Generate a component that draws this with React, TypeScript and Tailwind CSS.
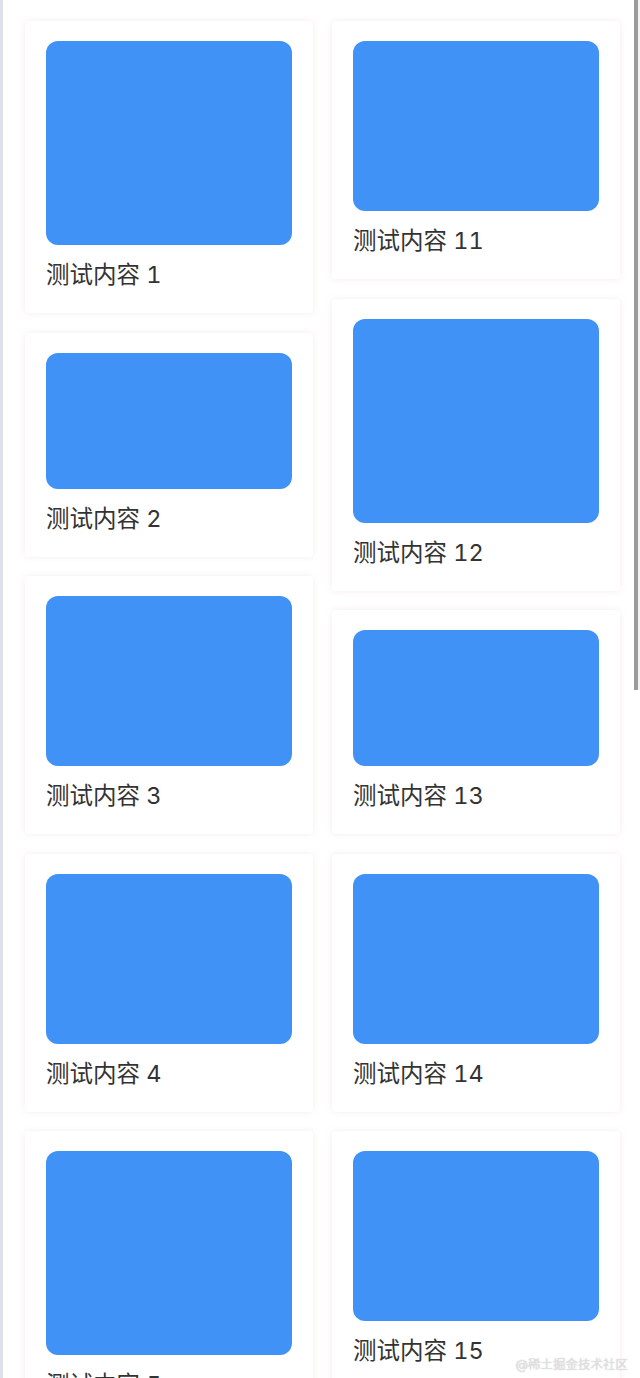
const leftCol = [
  { id: 1, h: 204 },
  { id: 2, h: 136 },
  { id: 3, h: 170 },
  { id: 4, h: 170 },
  { id: 5, h: 204 },
];

const rightCol = [
  { id: 11, h: 170 },
  { id: 12, h: 204 },
  { id: 13, h: 136 },
  { id: 14, h: 170 },
  { id: 15, h: 170 },
];

function Card({ id, h }: { id: number; h: number }) {
  return (
    <div className="bg-white rounded-[4px] px-[21px] pt-5 pb-[19px] shadow-[0_0_6px_rgba(225,200,195,0.35)]">
      <div className="w-full rounded-[12px] bg-[#4192f7]" style={{ height: h }} />
      <p className="mt-[11px] text-[23.5px] leading-[38px] tabular-nums text-[#333333]">测试内容 {id}</p>
    </div>
  );
}

export default function App() {
  return (
    <div
      className="relative h-[1378px] w-[640px] overflow-hidden bg-white border-l-[3px] border-[#dedfea]"
      style={{ fontFamily: 'Inter, "Noto Sans CJK SC", "Noto Sans", sans-serif' }}
    >
      {/* waterfall columns */}
      <div className="flex gap-[19px] pl-[22px] pt-[21px]">
        <div className="flex w-[288px] flex-col gap-[19.5px]">
          {leftCol.map((c) => (
            <Card key={c.id} {...c} />
          ))}
        </div>
        <div className="flex w-[288px] flex-col gap-[19.5px]">
          {rightCol.map((c) => (
            <Card key={c.id} {...c} />
          ))}
        </div>
      </div>

      {/* overlay scrollbar */}
      <div className="absolute right-0 top-0 h-[690px] w-[6px] bg-[#f4f4f4]">
        <div className="h-full w-[4px] bg-[#9b9b9b]" />
      </div>

      {/* watermark */}
      <div className="absolute bottom-[5px] right-[12px] text-[12.5px] leading-[16px] font-light text-[#ececec] [text-shadow:0_0_1px_rgba(120,120,120,0.8)]">
        @稀土掘金技术社区
      </div>
    </div>
  );
}
